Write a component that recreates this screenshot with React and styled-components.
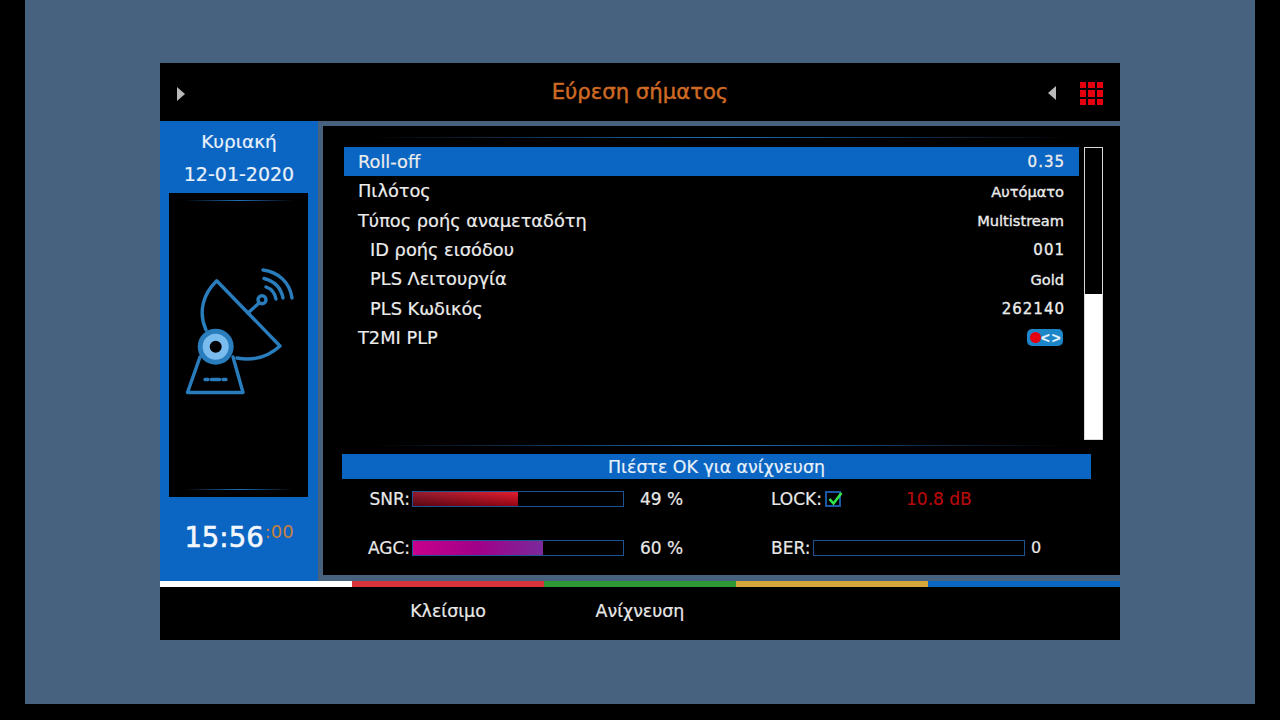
import React from 'react';
import styled, { createGlobalStyle } from 'styled-components';

const GlobalStyle = createGlobalStyle`
  html, body {
    margin: 0;
    padding: 0;
    background: #000;
  }
`;

const Screen = styled.div`
  width: 1230px;
  height: 704px;
  margin-left: 25px;
  padding: 63px 135px 0;
  box-sizing: border-box;
  background: #46627f;
  font-family: "DejaVu Sans", sans-serif;
  -webkit-text-stroke: 0.2px;
  color: #f0f0f0;
`;

const Header = styled.div`
  height: 58px;
  background: #000;
  display: grid;
  grid-template-columns: 1fr auto 1fr;
  align-items: center;
  padding: 3px 17px 0 17px;
  box-sizing: border-box;
`;

const Title = styled.div`
  text-align: center;
  font-size: 21.2px;
  -webkit-text-stroke: 0.45px;
  color: #cf6a24;
  margin-top: -4px;
`;

const HeadRight = styled.div`
  display: flex;
  align-items: center;
  justify-content: flex-end;
  gap: 24px;
`;

const Arrow = styled.div`
  width: 0;
  height: 0;
  border-top: 7px solid transparent;
  border-bottom: 7px solid transparent;
  ${p => p.$left
    ? 'border-right: 8px solid #b9b9b9;'
    : 'border-left: 8px solid #b9b9b9;'}
`;

const Dots = styled.div`
  display: grid;
  grid-template-columns: repeat(3, 6.4px);
  grid-auto-rows: 6.4px;
  gap: 2.1px;
`;

const Dot = styled.div`
  background: #e6000f;
`;

const Middle = styled.div`
  display: flex;
  height: 460px;
`;

const Sidebar = styled.div`
  width: 158px;
  background: #0b65c2;
  display: flex;
  flex-direction: column;
  align-items: center;
  padding-top: 5px;
  box-sizing: border-box;
`;

const SideText = styled.div`
  font-size: ${p => p.$size || 19}px;
  line-height: 32px;
  color: #e8f1fa;
`;

const IconBox = styled.div`
  width: 139px;
  height: 304px;
  margin: 3px 0 0 9px;
  align-self: flex-start;
  background: #000;
  display: flex;
  flex-direction: column;
  align-items: center;
  padding-top: 7px;
  box-sizing: border-box;
`;

const Glow = styled.div`
  height: 1px;
  width: ${p => p.$w}px;
  flex: none;
  margin: ${p => p.$m || '0'};
  background: linear-gradient(90deg, rgba(30,110,190,0), #1f6fb8 50%, rgba(30,110,190,0));
`;

const DishHolder = styled.div`
  flex: 1;
  display: flex;
  align-items: flex-start;
  justify-content: center;
  padding: 67px 0 0 5px;
`;

const Clock = styled.div`
  display: flex;
  align-items: flex-start;
  margin-top: 22px;
  font-size: 27.5px;
  line-height: 36px;
  -webkit-text-stroke: 0.6px;
  color: #f2f7fc;
`;

const Seconds = styled.span`
  font-size: 18px;
  line-height: 26px;
  -webkit-text-stroke: 0;
  margin-left: 1px;
  color: #c8803f;
`;

const Main = styled.div`
  width: 797px;
  height: 449px;
  margin: 5px 0 0 5px;
  background: #000;
  padding: 11px 0 0 19px;
  box-sizing: border-box;
`;

const ListArea = styled.div`
  display: flex;
  gap: 5px;
  height: 293px;
  margin: 9px 0 5px 2px;
`;

const Rows = styled.div`
  width: 735px;
`;

const Row = styled.div`
  height: 29.33px;
  display: flex;
  align-items: center;
  justify-content: space-between;
  padding: 0 15px 0 ${p => (p.$sub ? 26 : 14)}px;
  box-sizing: border-box;
  background: ${p => (p.$active ? '#0b65c2' : 'transparent')};
`;

const RowLabel = styled.div`
  font-size: 17.8px;
  color: #ececec;
`;

const RowValue = styled.div`
  font-size: ${p => (p.$num ? 15 : 14.6)}px;
  letter-spacing: ${p => (p.$num ? 1 : 0)}px;
  margin-right: ${p => (p.$num ? -1 : 0)}px;
  padding-top: 1px;
  -webkit-text-stroke: 0.35px;
  color: #ececec;
`;

const Toggle = styled.div`
  width: 36px;
  height: 17px;
  border-radius: 5px;
  background: #1c86c8;
  display: flex;
  align-items: center;
  padding-left: 3px;
  box-sizing: border-box;
  font-family: "Liberation Sans", sans-serif;
  font-size: 15px;
  font-weight: 700;
  letter-spacing: 2px;
  color: #e6f4ff;
  margin-right: 1px;
`;

const ToggleDot = styled.div`
  width: 11px;
  height: 11px;
  border-radius: 50%;
  background: #e6000f;
  flex: none;
`;

const Scrollbar = styled.div`
  width: 19px;
  height: 293px;
  border: 1px solid #d8d8d8;
  box-sizing: border-box;
  background: linear-gradient(#000 146px, #fff 146px);
`;

const Status = styled.div`
  width: 749px;
  height: 25px;
  margin-top: 8px;
  background: #0b65c2;
  text-align: center;
  font-size: 17.4px;
  line-height: 26px;
  color: #e8f1fa;
`;

const Signals = styled.div`
  display: grid;
  grid-template-columns: 70px 212px 147px 42px 212px auto;
  grid-auto-rows: 49px;
  margin-top: -5px;
  align-items: center;
  font-size: 17px;
`;

const SigLabel = styled.div`
  text-align: right;
  padding-right: 2px;
  white-space: nowrap;
  color: #e8e8e8;
`;

const LongLabel = styled(SigLabel)`
  text-align: left;
  padding-right: 0;
`;

const Meter = styled.div`
  height: 16px;
  border: 1px solid #1d5295;
  box-sizing: border-box;
  background: #000;
`;

const Fill = styled.div`
  height: 100%;
  background: ${p => p.$bg};
`;

const Percent = styled.div`
  padding-left: 16px;
  color: #e8e8e8;
`;

const LockCell = styled.div`
  display: flex;
  align-items: center;
  grid-column: span 3;
`;

const LockLabel = styled.div`
  width: 54px;
  color: #e8e8e8;
`;

const CheckBox = styled.div`
  width: 16px;
  height: 16px;
  border: 2px solid #1b57a5;
  box-sizing: border-box;
  display: flex;
  align-items: flex-start;
  justify-content: flex-start;
`;

const Decibel = styled.div`
  margin-left: 65px;
  color: #b80a0a;
`;

const BerValue = styled.div`
  padding-left: 6px;
  font-size: 16px;
  color: #e8e8e8;
`;

const Footer = styled.div`
  display: flex;
  height: 59px;
  background: #000;
`;

const FootCell = styled.div`
  width: 192px;
  border-top: 6px solid ${p => p.$c};
  text-align: center;
  font-size: 17.4px;
  line-height: 48px;
  color: #e8e8e8;
`;

const rows = [
  { label: 'Roll-off', value: '0.35', active: true, num: true },
  { label: 'Πιλότος', value: 'Αυτόματο' },
  { label: 'Τύπος ροής αναμεταδότη', value: 'Multistream' },
  { label: 'ID ροής εισόδου', value: '001', sub: true, num: true },
  { label: 'PLS Λειτουργία', value: 'Gold', sub: true },
  { label: 'PLS Κωδικός', value: '262140', sub: true, num: true },
];

const feet = [
  ['#ffffff', ''],
  ['#d8343a', 'Κλείσιμο'],
  ['#2e9a35', 'Ανίχνευση'],
  ['#d6a63c', ''],
  ['#0b65c2', ''],
];

const DishIcon = () => (
  <svg width="112" height="130" viewBox="20 18 112 130" fill="none" stroke="#2a7dbd" strokeWidth="3.4" strokeLinecap="round" strokeLinejoin="round">
    <path d="M41 80 C33 62 38 44 51.7 30.7 L115 96 C102 108 88 111 72 108" />
    <path d="M83 63 L94 53" />
    <circle cx="97" cy="49.7" r="4" />
    <path d="M101 37 C107 39 110 43 111 49" />
    <path d="M99 28.500 C109 31 116 38 118 48" />
    <path d="M98 20 C114 22 125 33 127 48" />
    <path d="M35 107 L22.500 142.500 L78 142.500 L68 107" />
    <path d="M40 129.500 L43 129.500 M46.500 129.500 L54.500 129.500 M58 129.500 L61 129.500" />
    <circle cx="50.700" cy="96.700" r="18" stroke="none" fill="#2a7dbd" />
    <circle cx="50.700" cy="96.700" r="9.500" stroke="#7bbcef" strokeWidth="7" fill="#000" />
  </svg>
);

const App = () => (
  <>
    <GlobalStyle />
    <Screen>
      <Header>
        <Arrow />
        <Title>Εύρεση σήματος</Title>
        <HeadRight>
          <Arrow $left />
          <Dots>
            {Array.from({ length: 9 }).map((_, i) => <Dot key={i} />)}
          </Dots>
        </HeadRight>
      </Header>
      <Middle>
        <Sidebar>
          <SideText $size={18.5}>Κυριακή</SideText>
          <SideText>12-01-2020</SideText>
          <IconBox>
            <Glow $w={110} />
            <DishHolder><DishIcon /></DishHolder>
            <Glow $w={110} $m="0 0 7px" />
          </IconBox>
          <Clock>15:56<Seconds>:00</Seconds></Clock>
        </Sidebar>
        <Main>
          <Glow $w={700} $m="0 0 0 28px" />
          <ListArea>
            <Rows>
              {rows.map(r => (
                <Row key={r.label} $active={r.active} $sub={r.sub}>
                  <RowLabel>{r.label}</RowLabel>
                  <RowValue $num={r.num}>{r.value}</RowValue>
                </Row>
              ))}
              <Row>
                <RowLabel>T2MI PLP</RowLabel>
                <Toggle><ToggleDot />&lt;&gt;</Toggle>
              </Row>
            </Rows>
            <Scrollbar />
          </ListArea>
          <Glow $w={700} $m="0 0 0 28px" />
          <Status>Πιέστε OK για ανίχνευση</Status>
          <Signals>
            <SigLabel>SNR:</SigLabel>
            <Meter><Fill style={{ width: '50%' }} $bg="linear-gradient(180deg, rgba(255,255,255,0.08), rgba(0,0,0,0.35)), linear-gradient(90deg, #8a0a1e, #e00a1e)" /></Meter>
            <Percent>49 %</Percent>
            <LockCell>
              <LockLabel>LOCK:</LockLabel>
              <CheckBox>
                <svg width="16" height="16" viewBox="0 0 16 16" fill="none" stroke="#2fe84a" strokeWidth="2.6" style={{ overflow: 'visible', flex: 'none' }}>
                  <path d="M2.500 6 L6.500 10.500 L14.500 0" />
                </svg>
              </CheckBox>
              <Decibel>10.8 dB</Decibel>
            </LockCell>
            <SigLabel>AGC:</SigLabel>
            <Meter><Fill style={{ width: '62%' }} $bg="linear-gradient(90deg, #c8008c, #a00088 50%, #7a2a9c)" /></Meter>
            <Percent>60 %</Percent>
            <LongLabel>BER:</LongLabel>
            <Meter />
            <BerValue>0</BerValue>
          </Signals>
        </Main>
      </Middle>
      <Footer>
        {feet.map(([c, t]) => <FootCell key={c} $c={c}>{t}</FootCell>)}
      </Footer>
    </Screen>
  </>
);

export default App;
